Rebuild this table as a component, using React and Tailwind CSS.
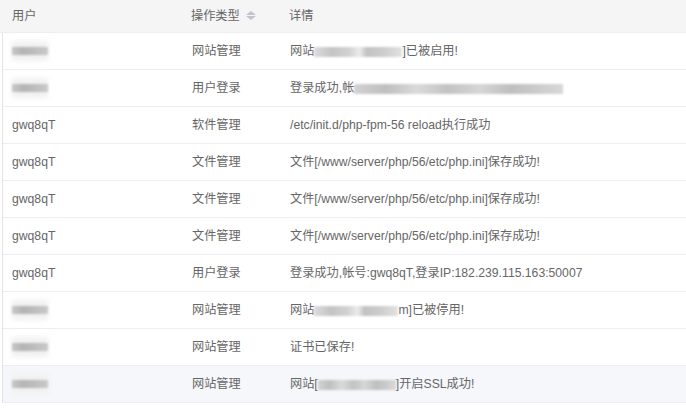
import React from "react";

const font = { fontFamily: '"Liberation Sans", "Noto Sans CJK SC", sans-serif' };

function Blur({ w, tone = "a" }) {
  const bg =
    tone === "a"
      ? "bg-[linear-gradient(90deg,#dcdcdc_0%,#c4c4c4_20%,#d2d2d2_40%,#ececec_52%,#c2c2c2_60%,#cdcdcd_80%,#e2e2e2_100%)]"
      : "bg-[linear-gradient(90deg,#d2d2d2_0%,#bfbfbf_15%,#dadada_30%,#c3c3c3_45%,#d6d6d6_60%,#bfbfbf_75%,#d8d8d8_100%)]";
  return (
    <span
      className={`inline-block h-[10px] align-middle blur-[1px] ${bg}`}
      style={{ width: w }}
    />
  );
}

function UserBlur() {
  return (
    <div className="relative w-[36px] h-[20px]">
      <div className="absolute inset-0 bg-[#f1f1f1] blur-[2px]" />
      <div className="absolute left-0 right-0 top-[6px] h-[8px] bg-[linear-gradient(90deg,#c8c8c8,#b4b4b4_30%,#bcbcbc_60%,#cacaca)] blur-[1px]" />
    </div>
  );
}

const rows = [
  { user: null, type: "网站管理", detail: <>网站<Blur w={88} />]已被启用!</> },
  { user: null, type: "用户登录", detail: <>登录成功,帐<Blur w={209} tone="b" /></> },
  { user: "gwq8qT", type: "软件管理", detail: "/etc/init.d/php-fpm-56 reload执行成功" },
  { user: "gwq8qT", type: "文件管理", detail: "文件[/www/server/php/56/etc/php.ini]保存成功!" },
  { user: "gwq8qT", type: "文件管理", detail: "文件[/www/server/php/56/etc/php.ini]保存成功!" },
  { user: "gwq8qT", type: "文件管理", detail: "文件[/www/server/php/56/etc/php.ini]保存成功!" },
  { user: "gwq8qT", type: "用户登录", detail: "登录成功,帐号:gwq8qT,登录IP:182.239.115.163:50007" },
  { user: null, type: "网站管理", detail: <>网站<Blur w={84} />m]已被停用!</> },
  { user: null, type: "网站管理", detail: "证书已保存!" },
  { user: null, type: "网站管理", detail: <>网站[<Blur w={78} tone="b" />]开启SSL成功!</>, hover: true },
];

export default function App() {
  return (
    <div className="w-[686px] h-[412px] bg-white text-[12.2px] text-[#666]" style={font}>
      <div className="flex h-[33px] items-center bg-[#f5f5f5] border-b border-[#ebeef5]">
        <div className="w-[179px] pl-[12px]">用户</div>
        <div className="w-[98px] pl-[12px] flex items-center gap-[6px]">
          操作类型
          <span className="flex flex-col gap-[1px]">
            <span className="w-0 h-0 border-x-[5px] border-x-transparent border-b-[4px] border-b-[#c0c4cc]" />
            <span className="w-0 h-0 border-x-[5px] border-x-transparent border-t-[4px] border-t-[#c0c4cc]" />
          </span>
        </div>
        <div className="pl-[12px]">详情</div>
      </div>
      <div className="ml-[2px] border-l border-[#e4e4e4]">
        {rows.map((r, i) => (
          <div
            key={i}
            className={`flex h-[37px] items-center border-b border-[#ebeef5] ${r.hover ? "bg-[#f5f7fa]" : ""}`}
          >
            <div className="w-[177px] pl-[9px]">{r.user ? r.user : <UserBlur />}</div>
            <div className="w-[98px] pl-[12px]">{r.type}</div>
            <div className="pl-[12px] whitespace-nowrap">{r.detail}</div>
          </div>
        ))}
      </div>
    </div>
  );
}
